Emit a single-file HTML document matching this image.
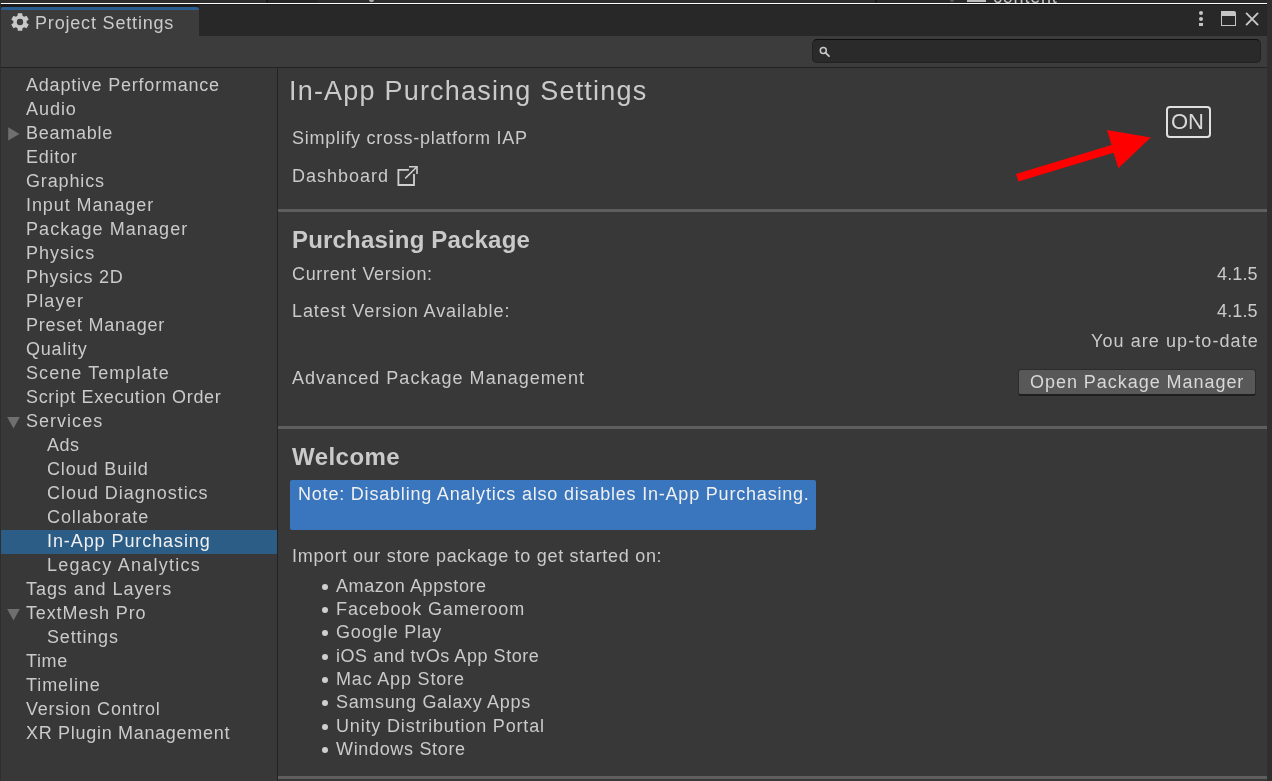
<!DOCTYPE html>
<html><head><meta charset="utf-8">
<style>
*{box-sizing:border-box}
html,body{margin:0;padding:0}
body{will-change:transform;width:1272px;height:781px;overflow:hidden;position:relative;background:#383838;font-family:"Liberation Sans",sans-serif;color:#cacaca}
.a{position:absolute}
.t{position:absolute;white-space:pre;font-size:18px;line-height:18px;letter-spacing:0.8px}
.li{position:absolute;white-space:pre;font-size:18px;line-height:18px}
</style></head><body>
<!-- top strip -->
<div class="a" style="left:0;top:0;width:1272px;height:3px;background:#2d2d2d"></div>
<div class="a" style="left:266px;top:0;width:2px;height:3px;background:#1b1b1b"></div>
<div class="a" style="left:268px;top:0;width:49px;height:3px;background:#262626"></div>
<div class="a" style="left:875px;top:0;width:2px;height:3px;background:#1b1b1b"></div>
<div class="a" style="left:877px;top:0;width:390px;height:3px;background:#2a2a2a"></div>
<div class="a" style="left:967px;top:0;width:19px;height:2px;background:#bdbdbd"></div>
<div class="a" style="left:369px;top:0;width:5px;height:2px;border-radius:0 0 2px 2px;background:#a8a8a8"></div>
<div class="a" style="left:950px;top:0;width:4px;height:2px;border-radius:0 0 2px 2px;background:#5a5a5a"></div>
<div class="a" style="left:0;top:0;width:1272px;height:3px;overflow:hidden"><div class="li" style="left:993px;top:-12px;letter-spacing:0.8px;color:#c4c4c4">content</div></div>
<div class="a" style="left:1px;top:3px;width:1266px;height:1px;background:#ffffff"></div>
<div class="a" style="left:1px;top:4px;width:1266px;height:32px;background:#282828"></div>
<div class="a" style="left:1px;top:4px;width:1266px;height:1px;background:#1a1a1a"></div>
<!-- tab -->
<div class="a" style="left:1px;top:5px;width:198px;height:2px;background:#1e1c1b"></div>
<div class="a" style="left:1px;top:7px;width:198px;height:3px;background:#2a5e90;border-top-right-radius:3px;border-top-left-radius:2px"></div>
<div class="a" style="left:1px;top:10px;width:198px;height:26px;background:#3c3c3c"></div>
<svg class="a" style="left:0;top:0" width="40" height="40" viewBox="0 0 40 40"><path fill-rule="evenodd" fill="#c8c8c8" d="M17.49 15.79 L17.80 13.17 L22.20 13.17 L22.51 15.79 L24.12 16.72 L26.55 15.68 L28.75 19.49 L26.63 21.07 L26.63 22.93 L28.75 24.51 L26.55 28.32 L24.12 27.28 L22.51 28.21 L22.20 30.83 L17.80 30.83 L17.49 28.21 L15.88 27.28 L13.45 28.32 L11.25 24.51 L13.37 22.93 L13.37 21.07 L11.25 19.49 L13.45 15.68 L15.88 16.72 Z M23.20 22 A3.2 3.2 0 1 0 16.80 22 A3.2 3.2 0 1 0 23.20 22 Z"/></svg>
<div class="t" style="left:35px;top:14px;letter-spacing:0.82px">Project Settings</div>
<!-- window icons -->
<div class="a" style="left:1199px;top:11px;width:4px;height:4px;border-radius:2px;background:#c4c4c4"></div>
<div class="a" style="left:1199px;top:17px;width:4px;height:4px;border-radius:2px;background:#c4c4c4"></div>
<div class="a" style="left:1199px;top:23px;width:4px;height:3px;background:#c4c4c4"></div>
<div class="a" style="left:1221px;top:11px;width:15px;height:15px;border:1.4px solid #c4c4c4;border-top:5px solid #c4c4c4;border-top-right-radius:2px"></div>
<svg class="a" style="left:1240px;top:7px" width="24" height="24" viewBox="0 0 24 24"><path d="M6.6 6.4 L17.6 17.6 M17.6 6.4 L6.6 17.6" stroke="#c8c8c8" stroke-width="1.9" stroke-linecap="round"/></svg>
<!-- right strip -->
<div class="a" style="left:1267px;top:0;width:5px;height:781px;background:#2f2f2f"></div>
<div class="a" style="left:0;top:4px;width:1px;height:777px;background:#2e2e2e"></div>
<!-- toolbar -->
<div class="a" style="left:1px;top:36px;width:1266px;height:31px;background:#3c3c3c"></div>
<div class="a" style="left:1px;top:67px;width:1266px;height:1px;background:#232323"></div>
<div class="a" style="left:812px;top:39px;width:449px;height:24px;border-radius:5px;background:#2a2a2a;border:1px solid #212121;border-top-color:#0f0f0f"></div>
<svg class="a" style="left:812px;top:39px" width="24" height="24" viewBox="0 0 24 24"><circle cx="11.3" cy="11.4" r="3" fill="none" stroke="#c8c8c8" stroke-width="1.5"/><path d="M13.4 13.6 L17 17.2" stroke="#c8c8c8" stroke-width="1.8" stroke-linecap="round"/></svg>
<!-- divider -->
<div class="a" style="left:277px;top:68px;width:1px;height:713px;background:#232323"></div>
<!-- selection -->
<div class="a" style="left:1px;top:530px;width:276px;height:24px;background:#2c5d87"></div>
<div class="li" style="left:26px;top:76px;letter-spacing:0.79px;">Adaptive Performance</div>
<div class="li" style="left:26px;top:100px;letter-spacing:0.95px;">Audio</div>
<div class="li" style="left:26px;top:124px;letter-spacing:0.73px;">Beamable</div>
<svg class="a" style="left:0;top:122px" width="24" height="24" viewBox="0 0 24 24"><path d="M8.2 5.3 L8.2 18.6 L19.5 11.95 Z" fill="#6f6f6f"/></svg>
<div class="li" style="left:26px;top:148px;letter-spacing:0.75px;">Editor</div>
<div class="li" style="left:26px;top:172px;letter-spacing:0.86px;">Graphics</div>
<div class="li" style="left:26px;top:196px;letter-spacing:0.93px;">Input Manager</div>
<div class="li" style="left:26px;top:220px;letter-spacing:1.08px;">Package Manager</div>
<div class="li" style="left:26px;top:244px;letter-spacing:1.02px;">Physics</div>
<div class="li" style="left:26px;top:268px;letter-spacing:0.75px;">Physics 2D</div>
<div class="li" style="left:26px;top:292px;letter-spacing:1.17px;">Player</div>
<div class="li" style="left:26px;top:316px;letter-spacing:0.78px;">Preset Manager</div>
<div class="li" style="left:26px;top:340px;letter-spacing:0.8px;">Quality</div>
<div class="li" style="left:26px;top:364px;letter-spacing:1.07px;">Scene Template</div>
<div class="li" style="left:26px;top:388px;letter-spacing:0.65px;">Script Execution Order</div>
<div class="li" style="left:26px;top:412px;letter-spacing:1.02px;">Services</div>
<svg class="a" style="left:0;top:410px" width="24" height="24" viewBox="0 0 24 24"><path d="M7.2 7.1 L19.8 7.1 L13.5 18.6 Z" fill="#6f6f6f"/></svg>
<div class="li" style="left:47px;top:436px;letter-spacing:0.45px;">Ads</div>
<div class="li" style="left:47px;top:460px;letter-spacing:0.87px;">Cloud Build</div>
<div class="li" style="left:47px;top:484px;letter-spacing:0.97px;">Cloud Diagnostics</div>
<div class="li" style="left:47px;top:508px;letter-spacing:0.92px;">Collaborate</div>
<div class="li" style="left:47px;top:532px;letter-spacing:0.92px; color:#f0f0f0;">In-App Purchasing</div>
<div class="li" style="left:47px;top:556px;letter-spacing:1.24px;">Legacy Analytics</div>
<div class="li" style="left:26px;top:580px;letter-spacing:0.94px;">Tags and Layers</div>
<div class="li" style="left:26px;top:604px;letter-spacing:0.86px;">TextMesh Pro</div>
<svg class="a" style="left:0;top:602px" width="24" height="24" viewBox="0 0 24 24"><path d="M7.2 7.1 L19.8 7.1 L13.5 18.6 Z" fill="#6f6f6f"/></svg>
<div class="li" style="left:47px;top:628px;letter-spacing:0.84px;">Settings</div>
<div class="li" style="left:26px;top:652px;letter-spacing:0.62px;">Time</div>
<div class="li" style="left:26px;top:676px;letter-spacing:0.92px;">Timeline</div>
<div class="li" style="left:26px;top:700px;letter-spacing:0.76px;">Version Control</div>
<div class="li" style="left:26px;top:724px;letter-spacing:0.7px;">XR Plugin Management</div>
<!-- right content -->
<div class="li" style="left:289px;top:78px;font-size:27px;line-height:27px;letter-spacing:1.2px">In-App Purchasing Settings</div>
<div class="li" style="left:292px;top:129px;letter-spacing:0.73px">Simplify cross-platform IAP</div>
<div class="li" style="left:292px;top:167px;letter-spacing:1.0px">Dashboard</div>
<svg class="a" style="left:390px;top:160px" width="35" height="32" viewBox="0 0 35 32" fill="none" stroke="#cfcfcf">
 <path d="M18.9 9.8 H8.4 V25 H24 V14.1" stroke-width="1.8"/>
 <path d="M19 6.8 H27 V13.9" stroke-width="1.6"/>
 <path d="M15.2 18.4 L27 6.8" stroke-width="1.5"/>
</svg>
<div class="a" style="left:1166px;top:106px;width:45px;height:32px;border:2px solid #e0e0e0;border-radius:4px"></div>
<div class="li" style="left:1171px;top:111px;font-size:22px;line-height:22px;color:#d8d8d8">ON</div>
<svg class="a" style="left:0;top:0" width="1272" height="200" viewBox="0 0 1272 200"><path d="M1016 174 L1111.6 145 L1107 130 L1150.8 137.4 L1118.3 168.2 L1113.6 152.8 L1018.4 181.5 Z" fill="#ff0000"/></svg>
<div class="a" style="left:278px;top:209px;width:989px;height:3px;background:#5e5e5e"></div>
<div class="li" style="left:292px;top:228px;font-size:24px;line-height:24px;font-weight:bold;letter-spacing:0.18px">Purchasing Package</div>
<div class="li" style="left:292px;top:265px;letter-spacing:0.67px">Current Version:</div>
<div class="li" style="left:1217px;top:265px;letter-spacing:0.15px">4.1.5</div>
<div class="li" style="left:292px;top:302px;letter-spacing:0.9px">Latest Version Available:</div>
<div class="li" style="left:1217px;top:302px;letter-spacing:0.15px">4.1.5</div>
<div class="li" style="left:1091px;top:332px;letter-spacing:1.08px">You are up-to-date</div>
<div class="li" style="left:292px;top:369px;letter-spacing:1.03px">Advanced Package Management</div>
<div class="a" style="left:1018px;top:369px;width:238px;height:27px;border-radius:3px;background:#585858;border:1px solid #2c2c2c;border-bottom:2px solid #1f1f1f"></div>
<div class="li" style="left:1030px;top:373px;letter-spacing:0.96px;color:#d8d8d8">Open Package Manager</div>
<div class="a" style="left:278px;top:426px;width:989px;height:3px;background:#5e5e5e"></div>
<div class="li" style="left:292px;top:445px;font-size:24px;line-height:24px;font-weight:bold;letter-spacing:0.45px">Welcome</div>
<div class="a" style="left:290px;top:480px;width:526px;height:50px;border-radius:2px;background:#3a76be"></div>
<div class="li" style="left:298px;top:485px;letter-spacing:0.8px;color:#f0f0f0">Note: Disabling Analytics also disables In-App Purchasing.</div>
<div class="li" style="left:292px;top:547px;letter-spacing:0.7px">Import our store package to get started on:</div>
<div class="a" style="left:322px;top:584px;width:6px;height:6px;border-radius:3px;background:#cfcfcf"></div>
<div class="li" style="left:336px;top:577px;letter-spacing:0.57px">Amazon Appstore</div>
<div class="a" style="left:322px;top:607px;width:6px;height:6px;border-radius:3px;background:#cfcfcf"></div>
<div class="li" style="left:336px;top:600px;letter-spacing:0.88px">Facebook Gameroom</div>
<div class="a" style="left:322px;top:630px;width:6px;height:6px;border-radius:3px;background:#cfcfcf"></div>
<div class="li" style="left:336px;top:623px;letter-spacing:0.73px">Google Play</div>
<div class="a" style="left:322px;top:654px;width:6px;height:6px;border-radius:3px;background:#cfcfcf"></div>
<div class="li" style="left:336px;top:647px;letter-spacing:0.56px">iOS and tvOs App Store</div>
<div class="a" style="left:322px;top:677px;width:6px;height:6px;border-radius:3px;background:#cfcfcf"></div>
<div class="li" style="left:336px;top:670px;letter-spacing:0.82px">Mac App Store</div>
<div class="a" style="left:322px;top:700px;width:6px;height:6px;border-radius:3px;background:#cfcfcf"></div>
<div class="li" style="left:336px;top:693px;letter-spacing:0.67px">Samsung Galaxy Apps</div>
<div class="a" style="left:322px;top:724px;width:6px;height:6px;border-radius:3px;background:#cfcfcf"></div>
<div class="li" style="left:336px;top:717px;letter-spacing:0.83px">Unity Distribution Portal</div>
<div class="a" style="left:322px;top:747px;width:6px;height:6px;border-radius:3px;background:#cfcfcf"></div>
<div class="li" style="left:336px;top:740px;letter-spacing:0.67px">Windows Store</div>
<div class="a" style="left:278px;top:776px;width:989px;height:3px;background:#5e5e5e"></div>
</body></html>
